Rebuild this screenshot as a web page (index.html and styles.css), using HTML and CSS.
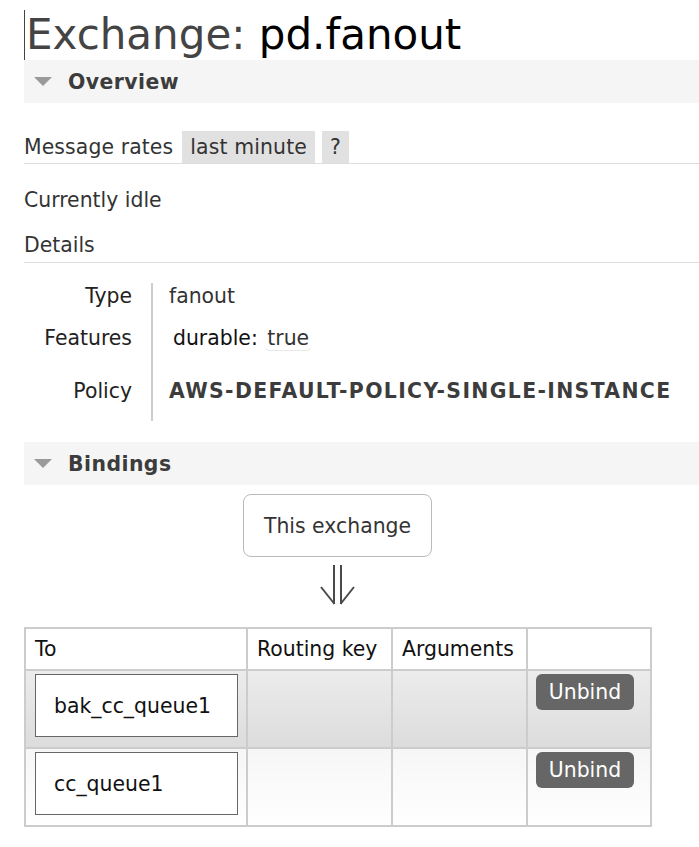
FILE: index.html
```html
<!DOCTYPE html>
<html>
<head>
<meta charset="utf-8">
<link rel="stylesheet" href="styles.css">
</head>
<body>
<div class="page">
  <h1 class="title"><span class="title-label">Exchange:</span> <b class="title-name">pd.fanout</b></h1>

  <div class="section-head"><span class="tri"></span><span>Overview</span></div>
  <div class="section-body">
    <div class="rates">
      <span class="rates-label">Message rates</span>
      <span class="chip">last minute</span>
      <span class="chip">?</span>
    </div>
    <p class="idle">Currently idle</p>
    <h3 class="details">Details</h3>
    <div class="facts">
      <div class="facts-keys">
        <div class="k k-type">Type</div>
        <div class="k k-feat">Features</div>
        <div class="k k-pol">Policy</div>
      </div>
      <div class="facts-vals">
        <div class="v v-type">fanout</div>
        <div class="v v-feat">durable: <span class="pill">true</span></div>
        <div class="v v-pol"><b>AWS-DEFAULT-POLICY-SINGLE-INSTANCE</b></div>
      </div>
    </div>
  </div>

  <div class="section-head bindings"><span class="tri"></span><span>Bindings</span></div>
  <div class="flow">
    <div class="this-ex">This exchange</div>
    <svg class="arrow" width="36" height="42" viewBox="0 0 36 42">
      <g stroke="#4a4a4a" stroke-width="2" fill="none" stroke-linecap="butt">
        <line x1="14" y1="1" x2="14" y2="40"/>
        <line x1="21" y1="1" x2="21" y2="40"/>
        <line x1="1" y1="23" x2="14.5" y2="40"/>
        <line x1="34" y1="23" x2="20.5" y2="40"/>
      </g>
    </svg>
  </div>

  <table class="bind">
    <thead>
      <tr><th class="c1">To</th><th class="c2">Routing key</th><th class="c3">Arguments</th><th class="c4"></th></tr>
    </thead>
    <tbody>
      <tr class="odd">
        <td><div class="q">bak_cc_queue1</div></td>
        <td></td><td></td>
        <td><span class="btn">Unbind</span></td>
      </tr>
      <tr class="even">
        <td><div class="q">cc_queue1</div></td>
        <td></td><td></td>
        <td><span class="btn">Unbind</span></td>
      </tr>
    </tbody>
  </table>
</div>
</body>
</html>
```

FILE: styles.css
```css
* { box-sizing: border-box; }
html, body { margin: 0; padding: 0; background: #fff; }
body {
  font-family: "DejaVu Sans", Verdana, sans-serif;
  font-size: 20.4px;
  color: #484848;
}
.page { padding-left: 24px; }

.title {
  margin: 10px 0 0;
  padding: 0 0 0 1px;
  height: 50px;
  font-weight: normal;
  font-size: 42px;
  line-height: 50px;
  border-left: 1px solid #444;
  white-space: nowrap;
}
.title-label { color: #444; }
.title-name { font-weight: normal; color: #000; }

.section-head {
  display: flex;
  align-items: center;
  height: 43px;
  background: #f5f5f5;
  font-weight: bold;
  color: #3c3c3c;
  font-size: 20.4px;
  letter-spacing: 0.45px;
}
.tri {
  width: 0; height: 0;
  border-left: 9px solid transparent;
  border-right: 9px solid transparent;
  border-top: 9px solid #9a9a9a;
  margin-left: 10px;
  margin-right: 16px;
}

.section-body { padding-top: 28px; }
.rates {
  display: flex;
  align-items: center;
  height: 33px;
  border-bottom: 1px solid #ddd;
  color: #333;
}
.rates-label { margin-right: 9px; letter-spacing: 0.1px; }
.chip {
  background: #e1e1e1;
  height: 32px;
  line-height: 32px;
  padding: 0 8px;
  margin-right: 7px;
  color: #333;
  letter-spacing: 0.15px;
}
.idle { margin: 22px 0 0; line-height: 28px; color: #333; }
.details {
  margin: 17px 0 0;
  font-weight: normal;
  font-size: 20.4px;
  line-height: 28px;
  padding-bottom: 3px;
  border-bottom: 1px solid #ddd;
  color: #333;
}

.facts {
  display: flex;
  margin-top: 20px;
  margin-bottom: 21px;
}
.facts-keys {
  width: 129px;
  text-align: right;
  padding-right: 19px;
  border-right: 2px solid #ccc;
  color: #222;
}
.facts-vals { padding-left: 16px; color: #333; }
.k, .v { line-height: 28px; }
.k-type, .v-type { margin-top: -1px; height: 42px; }
.k-feat, .v-feat { height: 53px; }
.k-pol, .v-pol { height: 44px; }
.v-feat { padding-left: 4px; color: #111; }
.pill {
  display: inline-block;
  line-height: 24px;
  padding: 0 3px;
  border-bottom: 1px solid #e8e8e8;
  border-radius: 0 0 6px 6px;
  color: #333;
}
.v-pol b { color: #3c3c3c; letter-spacing: 1.35px; }

.flow {
  width: 627px;
  display: flex;
  flex-direction: column;
  align-items: center;
  padding-top: 9px;
}
.this-ex {
  width: 189px;
  height: 63px;
  border: 1px solid #bbb;
  border-radius: 8px;
  display: flex;
  align-items: center;
  justify-content: center;
  color: #333;
}
.arrow { display: block; margin-top: 7px; margin-left: 1px; }

.bind {
  margin-top: 21px;
  border-collapse: collapse;
  border: 2px solid #ccc;
  color: #111;
}
.bind th, .bind td {
  border: 2px solid #ccc;
  padding: 0;
  vertical-align: top;
}
.bind th {
  font-weight: normal;
  text-align: left;
  height: 42px;
  padding: 0 9px;
  vertical-align: middle;
  background: #fff;
}
.c1 { width: 222px; }
.c2 { width: 145px; }
.c3 { width: 135px; }
.c4 { width: 124px; }
.bind td { height: 78px; }
.odd td { background: linear-gradient(#ececec, #dcdcdc); }
.even td { background: linear-gradient(#f6f6f6, #fff); }
.q {
  margin: 3px 0 0 9px;
  width: 203px;
  height: 63px;
  border: 1px solid #666;
  background: #fff;
  display: flex;
  align-items: center;
  padding-left: 18px;
  color: #111;
}
.btn {
  display: inline-block;
  margin: 3px 0 0 8px;
  width: 98px;
  height: 36px;
  line-height: 36px;
  text-align: center;
  background: #666;
  color: #fff;
  border-radius: 6px;
}
```
